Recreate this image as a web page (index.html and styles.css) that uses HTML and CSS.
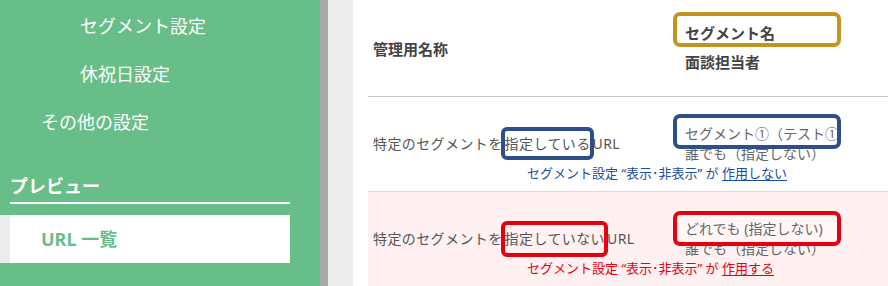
FILE: index.html
```html
<!DOCTYPE html>
<html lang="ja">
<head>
<meta charset="utf-8">
<title>URL 一覧</title>
<link rel="stylesheet" href="styles.css">
</head>
<body>
<div class="page">
  <nav class="sidebar">
    <ul class="menu">
      <li class="sub">セグメント設定</li>
      <li class="sub">休祝日設定</li>
      <li class="top">その他の設定</li>
    </ul>
    <div class="section">
      <h2 class="section-title">プレビュー</h2>
      <a class="active">URL 一覧</a>
    </div>
  </nav>
  <div class="divider"></div>
  <div class="gutter"></div>
  <main class="content">
    <div class="table">
      <div class="row head">
        <div class="c1">管理用名称</div>
        <div class="c2">
          <div class="l1 mark gold">セグメント名</div>
          <div class="l2">面談担当者</div>
        </div>
      </div>
      <div class="row body">
        <div class="c1">特定のセグメントを<span class="hl blue">指定している</span>URL</div>
        <div class="c2">
          <div class="l1 mark blue">セグメント①（テスト①</div>
          <div class="l2">誰でも（指定しない）</div>
        </div>
        <div class="note note-blue">セグメント設定 “表示･非表示” が <u>作用しない</u></div>
      </div>
      <div class="row body pink">
        <div class="c1">特定のセグメントを<span class="hl red">指定していない</span>URL</div>
        <div class="c2">
          <div class="l1 mark red">どれでも (指定しない)</div>
          <div class="l2">誰でも（指定しない）</div>
        </div>
        <div class="note note-red">セグメント設定 “表示･非表示” が <u>作用する</u></div>
      </div>
    </div>
  </main>
</div>
</body>
</html>
```

FILE: styles.css
```css
html, body {
  margin: 0;
  padding: 0;
}
body {
  font-family: "Noto Sans", "Noto Sans CJK JP", sans-serif;
  height: 286px;
  overflow: hidden;
  background: #fff;
}
.page {
  display: flex;
  height: 286px;
}
.sidebar {
  width: 320px;
  flex: none;
  background: #68be89;
  color: #fff;
}
.menu {
  list-style: none;
  margin: 0;
  padding: 2px 0 0;
}
.menu li {
  height: 48px;
  line-height: 48px;
  font-size: 18px;
}
.menu .sub { padding-left: 80px; }
.menu .top { padding-left: 41px; }
.section {
  padding-top: 28px;
}
.section-title {
  margin: 0 30px 0 10px;
  padding: 0 0 4px;
  font-size: 18px;
  line-height: 24px;
  font-weight: 700;
  border-bottom: 2px solid #fff;
}
.active {
  display: block;
  margin: 11px 30px 0 0;
  height: 48px;
  line-height: 48px;
  background: #fff;
  border-left: 10px solid #ececec;
  padding-left: 31px;
  color: #68be89;
  font-weight: 700;
  font-size: 18px;
}
.divider {
  width: 8px;
  flex: none;
  background: #a9a9a9;
}
.gutter {
  width: 25px;
  flex: none;
  background: #ececec;
}
.content {
  flex: 1;
  background: #fff;
}
.table {
  margin-left: 15px;
}
.row {
  display: grid;
  grid-template-columns: 312px 1fr;
  align-items: center;
}
.c1, .c2 {
  padding-left: 5px;
}
.head {
  height: 96px;
  border-bottom: 1px solid #c8c8c8;
  color: #444;
  font-weight: 700;
  font-size: 15px;
}
.head .c2 {
  line-height: 29px;
}
.body {
  padding: 27px 0 9px;
  border-bottom: 1px solid #dcdcdc;
  font-size: 14px;
}
.body .c1 {
  color: #555;
  line-height: 20px;
  letter-spacing: 0.4px;
}
.body .c2 {
  color: #666;
  line-height: 20px;
}
.pink {
  background: #fff1f1;
  border-bottom: none;
  padding-bottom: 20px;
}
.l1 {
  position: relative;
  z-index: 1;
}
.mark::before {
  content: "";
  position: absolute;
  left: -12px;
  width: 160px;
  top: -10px;
  height: 27px;
  border: 4px solid;
  border-radius: 7px;
  background: #fff;
  z-index: -1;
}
.head .mark::before {
  top: -7px;
}
.mark.gold::before { border-color: #c2961e; }
.mark.blue::before { border-color: #2d4e89; }
.mark.red::before { border-color: #e5000f; background: #fff6f6; top: -8px; }
.hl {
  position: relative;
  display: inline-block;
  margin: 0 2px;
}
.hl::before {
  content: "";
  position: absolute;
  left: -4px;
  right: -3px;
  top: -7px;
  bottom: -6px;
  border: 4px solid;
  border-radius: 6px;
}
.hl.blue::before { border-color: #2d4e89; }
.hl.red::before { border-color: #e5000f; top: -8px; bottom: -8px; }
.note {
  grid-column: 1 / -1;
  padding-left: 159px;
  font-size: 13px;
  line-height: 18px;
}
.note u {
  text-underline-offset: 2px;
}
.note-blue { color: #1d4e9c; }
.note-red { color: #e5000f; }
```
